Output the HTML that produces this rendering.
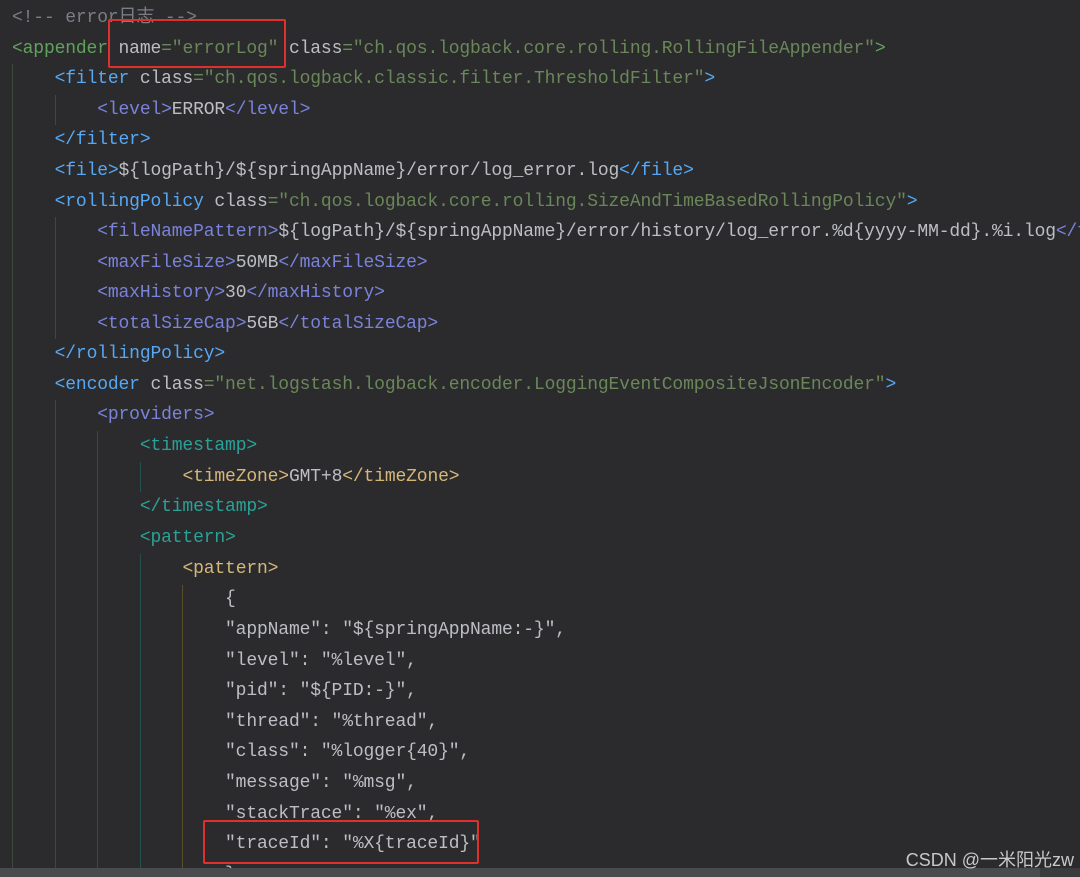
<!DOCTYPE html>
<html><head><meta charset="utf-8"><style>
html,body{margin:0;padding:0;overflow:hidden}
body{width:1080px;height:877px;background:#2b2b2d;position:relative;overflow:hidden;font-family:"Liberation Mono","Noto Sans CJK SC",monospace;font-size:18px;letter-spacing:-0.15px;color:#bcbec4}
.l{position:absolute;left:12px;white-space:pre;height:30px;line-height:30px}
.c{color:#7a7e85}.g{color:#5fa35b}.v{color:#6a8759}.b{color:#56a8f5}.p{color:#7a82da}.t{color:#2aa198}.y{color:#d5b778}.a{color:#bcbec4}
.guide{position:absolute;width:1px}
.box{position:absolute;border:2px solid #e0302e;border-radius:2px}
</style></head><body>
<div class="guide" style="left:12px;top:64px;height:810px;background:#3a4a3a"></div>
<div class="guide" style="left:55px;top:95px;height:30px;background:#2f4a60"></div>
<div class="guide" style="left:55px;top:217px;height:122px;background:#2f4a60"></div>
<div class="guide" style="left:55px;top:400px;height:477px;background:#2f4a60"></div>
<div class="guide" style="left:97px;top:431px;height:446px;background:#444"></div>
<div class="guide" style="left:140px;top:462px;height:30px;background:#22504a"></div>
<div class="guide" style="left:140px;top:554px;height:323px;background:#22504a"></div>
<div class="guide" style="left:182px;top:585px;height:292px;background:#5a4d2a"></div>
<div class="l" style="top:3px"><span class="c">&lt;!-- error日志 --&gt;</span></div>
<div class="l" style="top:34px"><span class="g">&lt;appender</span> <span class="a">name</span><span class="v">="errorLog"</span> <span class="a">class</span><span class="v">="ch.qos.logback.core.rolling.RollingFileAppender"</span><span class="g">&gt;</span></div>
<div class="l" style="top:64px">    <span class="b">&lt;filter</span> class<span class="v">="ch.qos.logback.classic.filter.ThresholdFilter"</span><span class="b">&gt;</span></div>
<div class="l" style="top:95px">        <span class="p">&lt;level&gt;</span>ERROR<span class="p">&lt;/level&gt;</span></div>
<div class="l" style="top:125px">    <span class="b">&lt;/filter&gt;</span></div>
<div class="l" style="top:156px">    <span class="b">&lt;file&gt;</span>${logPath}/${springAppName}/error/log_error.log<span class="b">&lt;/file&gt;</span></div>
<div class="l" style="top:187px">    <span class="b">&lt;rollingPolicy</span> class<span class="v">="ch.qos.logback.core.rolling.SizeAndTimeBasedRollingPolicy"</span><span class="b">&gt;</span></div>
<div class="l" style="top:217px">        <span class="p">&lt;fileNamePattern&gt;</span>${logPath}/${springAppName}/error/history/log_error.%d{yyyy-MM-dd}.%i.log<span class="p">&lt;/f</span></div>
<div class="l" style="top:248px">        <span class="p">&lt;maxFileSize&gt;</span>50MB<span class="p">&lt;/maxFileSize&gt;</span></div>
<div class="l" style="top:278px">        <span class="p">&lt;maxHistory&gt;</span>30<span class="p">&lt;/maxHistory&gt;</span></div>
<div class="l" style="top:309px">        <span class="p">&lt;totalSizeCap&gt;</span>5GB<span class="p">&lt;/totalSizeCap&gt;</span></div>
<div class="l" style="top:339px">    <span class="b">&lt;/rollingPolicy&gt;</span></div>
<div class="l" style="top:370px">    <span class="b">&lt;encoder</span> class<span class="v">="net.logstash.logback.encoder.LoggingEventCompositeJsonEncoder"</span><span class="b">&gt;</span></div>
<div class="l" style="top:400px">        <span class="p">&lt;providers&gt;</span></div>
<div class="l" style="top:431px">            <span class="t">&lt;timestamp&gt;</span></div>
<div class="l" style="top:462px">                <span class="y">&lt;timeZone&gt;</span>GMT+8<span class="y">&lt;/timeZone&gt;</span></div>
<div class="l" style="top:492px">            <span class="t">&lt;/timestamp&gt;</span></div>
<div class="l" style="top:523px">            <span class="t">&lt;pattern&gt;</span></div>
<div class="l" style="top:554px">                <span class="y">&lt;pattern&gt;</span></div>
<div class="l" style="top:584px">                    {</div>
<div class="l" style="top:615px">                    "appName": "${springAppName:-}",</div>
<div class="l" style="top:646px">                    "level": "%level",</div>
<div class="l" style="top:676px">                    "pid": "${PID:-}",</div>
<div class="l" style="top:707px">                    "thread": "%thread",</div>
<div class="l" style="top:737px">                    "class": "%logger{40}",</div>
<div class="l" style="top:768px">                    "message": "%msg",</div>
<div class="l" style="top:799px">                    "stackTrace": "%ex",</div>
<div class="l" style="top:829px">                    "traceId": "%X{traceId}"</div>
<div class="l" style="top:860px">                    },</div>
<div class="box" style="left:108px;top:19px;width:174px;height:45px"></div>
<div class="box" style="left:203px;top:820px;width:272px;height:40px"></div>
<div style="position:absolute;left:0;top:868px;width:1080px;height:9px;background:#3a3b3d"></div>
<div style="position:absolute;left:0;top:868px;width:1040px;height:9px;background:#4a4b4e"></div>
<div style="position:absolute;right:6px;top:846px;font-family:'Liberation Sans','Noto Sans CJK SC',sans-serif;font-size:18px;letter-spacing:0;color:#c8c8c8">CSDN @一米阳光zw</div>
</body></html>
